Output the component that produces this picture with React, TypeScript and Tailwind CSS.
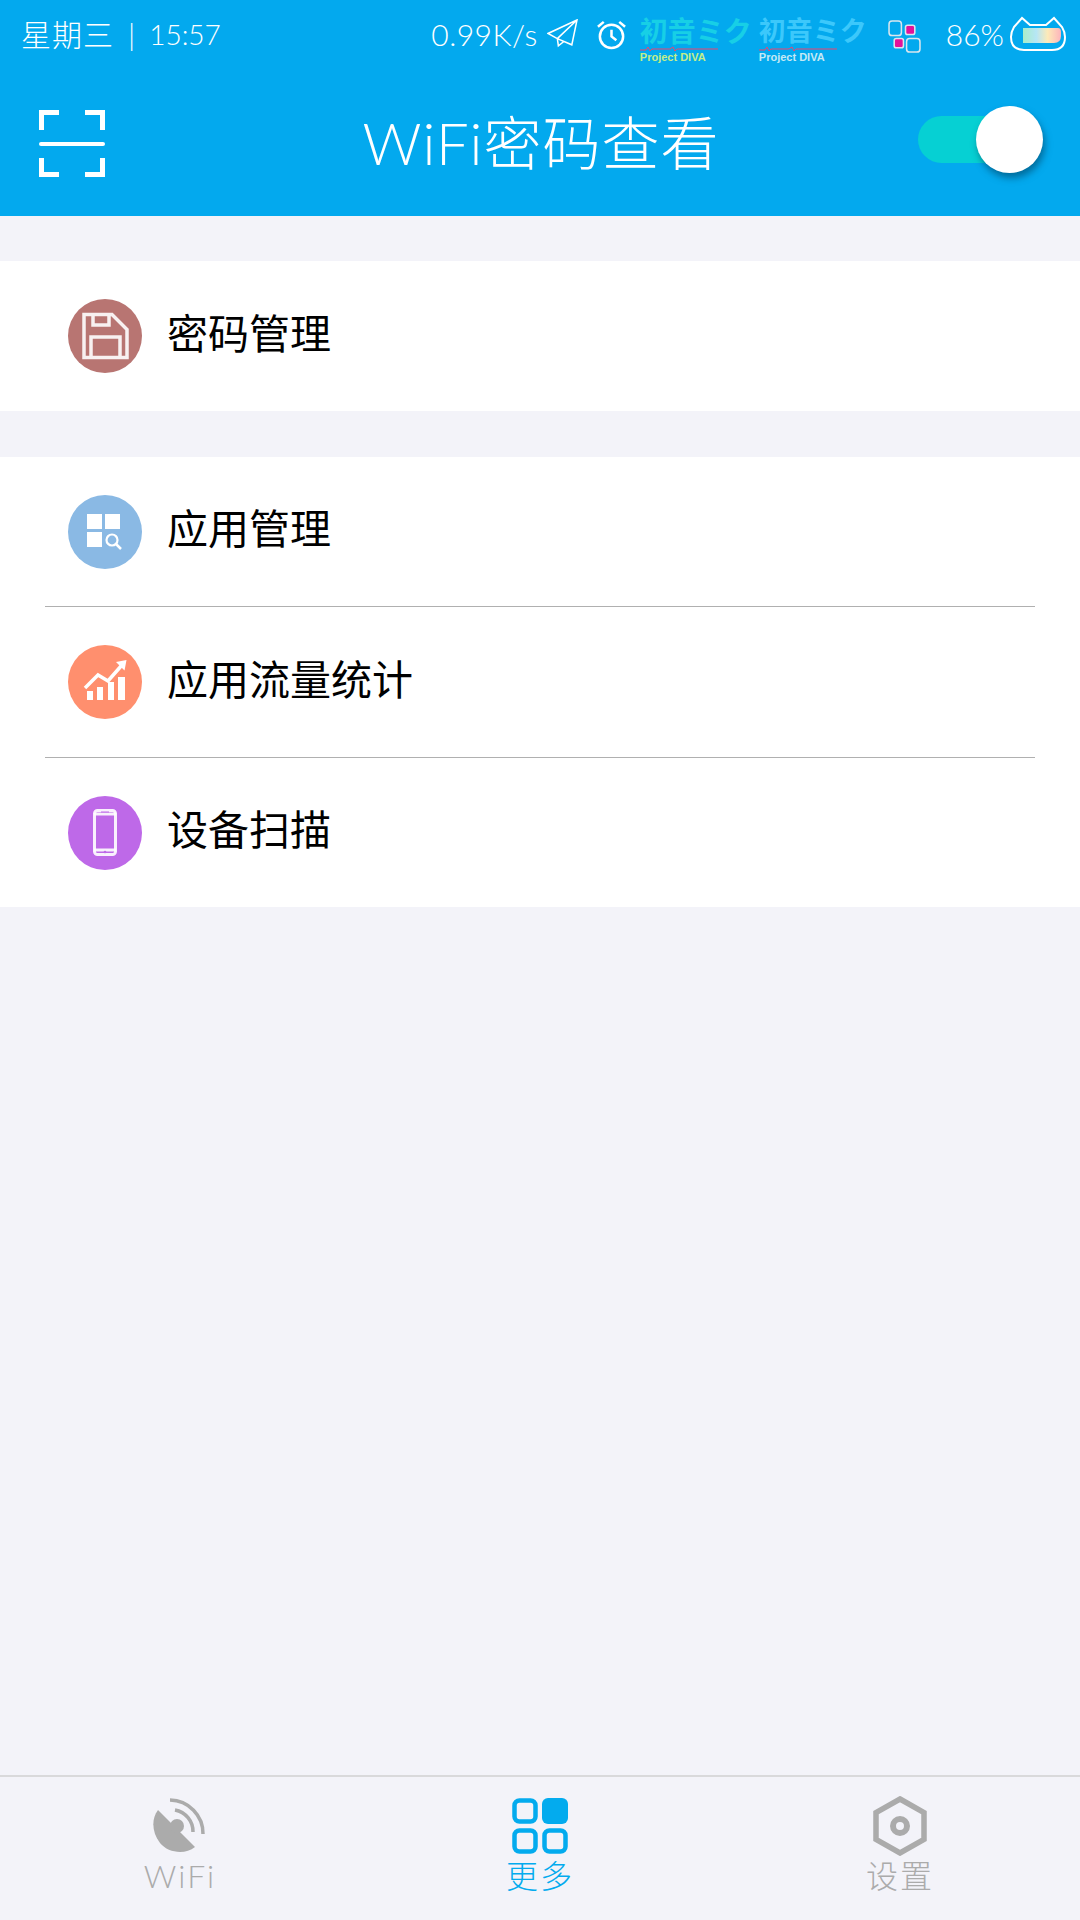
import React from 'react';

const cjk = "font-['Lato','Noto_Sans_CJK_SC',sans-serif]";

const MikuLogo: React.FC<{ mono?: boolean }> = ({ mono }) => (
  <div className={`relative mt-[12px] flex h-[48px] flex-col ${mono ? 'w-[108px]' : 'w-[113px]'}`}>
    <span className={`whitespace-nowrap leading-[30px] font-bold ${cjk} ${mono ? 'text-[27px] text-[#3cc8fb]' : 'text-[28px] text-[#17cfe6]'}`}>初音ミク</span>
    <svg width="78" height="6" viewBox="0 0 78 6">
      <path d="M0 4h6l2-3 2 4 2-2h18l3-2 2 4 2-2h41" fill="none" stroke="#f0436e" strokeWidth="1" />
    </svg>
    <span className={`text-[11px] leading-[11px] font-bold whitespace-nowrap font-['Liberation_Sans',sans-serif] ${mono ? 'text-[#c4e9f5]' : 'text-[#c2ee8a]'}`}>Project DIVA</span>
  </div>
);

const StatusBar = () => (
  <div className={`flex h-[68px] items-center pl-[21px] pr-[13px] text-[30px] font-light text-white ${cjk}`}>
    <div className="flex items-center gap-[14px] whitespace-nowrap">
      <span className="tracking-[1px]">星期三</span>
      <span>|</span>
      <span className="text-[28px]">15:57</span>
    </div>
    <div className="ml-auto flex items-center">
      <span className="whitespace-nowrap tracking-[0.5px]">0.99K/s</span>
      <svg width="31" height="31" viewBox="0 0 30 30" className="ml-[9px]" fill="none" stroke="white" strokeWidth="1.500">
        <path d="M29 1 1 14l9 5 14 6L29 1ZM29 1 10 19l1 7 5-4" />
      </svg>
      <svg width="31" height="31" viewBox="0 0 32 32" className="ml-[18px]" fill="none" stroke="white" strokeWidth="2.600">
        <circle cx="16" cy="18" r="12" />
        <path d="M16 11v7l5 4M2 8l6-5M30 8l-6-5" />
      </svg>
      <div className="ml-[13px] flex gap-[6px]">
        <MikuLogo />
        <MikuLogo mono />
      </div>
      <svg width="33" height="33" viewBox="0 0 32 32" className="ml-[21px] mt-[4px]" fill="none" stroke="#d9e6ee" strokeWidth="1.500">
        <rect x="1" y="1" width="12" height="14" rx="3" />
        <rect x="18" y="18" width="13" height="13" rx="3" />
        <rect x="17" y="5" width="9" height="9" rx="2" fill="#e2129a" />
        <rect x="6" y="18" width="9" height="9" rx="2" fill="#e2129a" />
      </svg>
      <span className="ml-[25px] whitespace-nowrap">86%</span>
      <svg width="58" height="36" viewBox="0 0 56 36" className="ml-[5px]">
        <defs>
          <linearGradient id="batt" x1="0" x2="1">
            <stop offset="0" stopColor="#a8edc8" />
            <stop offset="0.35" stopColor="#b6e6f5" />
            <stop offset="0.65" stopColor="#fdeab8" />
            <stop offset="1" stopColor="#fdb4bc" />
          </linearGradient>
        </defs>
        <path d="M4 11 12 2l8 7h16l8-7 8 9q3 5 3 10 0 13-13 13H14Q1 34 1 21q0-5 3-10Z" fill="none" stroke="white" strokeWidth="2" />
        <path d="M13 12h35q3 0 3 4v4q0 7-7 7H13Z" fill="url(#batt)" />
      </svg>
    </div>
  </div>
);

const ScanIcon = () => (
  <svg width="66" height="67" viewBox="0 0 66 67" fill="none" stroke="white" strokeWidth="5">
    <path d="M20 2.500H2.500V20M46 2.500h17.500V20M20 64.500H2.500V48M46 64.500h17.500V48" />
    <path d="M2 34h62" strokeLinecap="round" strokeWidth="4" />
  </svg>
);

const Header = () => (
  <div className="grid h-[148px] grid-cols-[1fr_auto_1fr] items-center pl-[39px] pr-[37px] pt-[2px]">
    <ScanIcon />
    <h1 className={`whitespace-nowrap text-[58px] leading-none font-light tracking-[1px] text-white ${cjk}`}>WiFi密码查看</h1>
    <div className="relative ml-auto -mt-[7px] h-[47px] w-[125px]">
      <div className="h-[47px] w-[90px] rounded-full bg-[#06d0d3]" />
      <div className="absolute right-0 top-[-10px] h-[67px] w-[67px] rounded-full bg-white shadow-[2px_5px_7px_rgba(0,60,90,0.55)]" />
    </div>
  </div>
);

const IconCircle: React.FC<{ color: string; children: React.ReactNode }> = ({ color, children }) => (
  <div className={`flex h-[74px] w-[74px] items-center justify-center rounded-full ${color}`}>
    <svg width="74" height="74" viewBox="0 0 74 74">{children}</svg>
  </div>
);

const Row: React.FC<{ label: string; icon: React.ReactNode; height?: string }> = ({ label, icon, height = 'h-[150px]' }) => (
  <div className={`flex items-center pl-[68px] ${height}`}>
    {icon}
    <span className={`ml-[25px] pb-[6px] text-[41px] leading-none font-normal text-black ${cjk}`}>{label}</span>
  </div>
);

const FloppyIcon = () => (
  <IconCircle color="bg-[#b87572]">
    <g fill="none" stroke="white" strokeWidth="3.500" opacity="0.9">
      <path d="M16 15.500h28l15 15v28H16Z" />
      <path d="M23 58V38h29v20M25 16v10h16V16" />
    </g>
  </IconCircle>
);

const AppsIcon = () => (
  <IconCircle color="bg-[#8ab9e4]">
    <g fill="white">
      <rect x="19" y="19" width="15" height="15" />
      <rect x="37" y="19" width="15" height="15" />
      <rect x="19" y="37" width="15" height="15" />
    </g>
    <circle cx="44" cy="45" r="5.500" fill="none" stroke="white" strokeWidth="2.200" />
    <path d="m48 49 5 5" stroke="white" strokeWidth="2.500" />
  </IconCircle>
);

const ChartIcon = () => (
  <IconCircle color="bg-[#ff8f6e]">
    <g fill="white">
      <rect x="19" y="46" width="6" height="9" />
      <rect x="29" y="42" width="6" height="13" />
      <rect x="40" y="37" width="6" height="18" />
      <rect x="50" y="32" width="7" height="23" />
    </g>
    <path d="m17 43 13-13 10 6 14-16" fill="none" stroke="white" strokeWidth="3.500" />
    <path d="m48 17 10.500-2-2 10.500Z" fill="white" />
  </IconCircle>
);

const PhoneIcon = () => (
  <IconCircle color="bg-[#be69e8]">
    <rect x="26.500" y="14.500" width="21" height="44" rx="3" fill="none" stroke="white" strokeWidth="3" opacity="0.9" />
    <path d="M26 18h22M26 54h22" stroke="white" strokeWidth="3" opacity="0.9" />
    <path d="M33 16h8" stroke="#be69e8" strokeWidth="1" />
    <circle cx="37" cy="56" r="1.300" fill="#be69e8" />
  </IconCircle>
);

const Divider = () => <div className="mx-[45px] h-px bg-[#b0b0b0]" />;

const NavItem: React.FC<{ label: string; active?: boolean; children: React.ReactNode }> = ({ label, active, children }) => (
  <div className="flex flex-col items-center">
    {children}
    <span className={`mt-[5px] whitespace-nowrap text-[32px] leading-[34px] font-light tracking-[2px] ${cjk} ${active ? 'text-[#03abee]' : 'text-[#ababab]'}`}>{label}</span>
  </div>
);

const BottomNav = () => (
  <div className="grid h-[145px] grid-cols-3 items-start border-t-2 border-[#d9d9db] pt-[21px]">
    <NavItem label="WiFi">
      <svg width="56" height="56" viewBox="0 0 56 56">
        <path d="M6 12 43 49C33 57 16 55 8 45 0 35-1 21 6 12Z" fill="#ababab" />
        <circle cx="25" cy="28" r="7" fill="#ababab" />
        <path d="M23 12a22 22 0 0 1 18 22" fill="none" stroke="#ababab" strokeWidth="3.500" />
        <path d="M18 2a33.500 33.500 0 0 1 33 34" fill="none" stroke="#ababab" strokeWidth="3.500" />
      </svg>
    </NavItem>
    <NavItem label="更多" active>
      <svg width="56" height="56" viewBox="0 0 56 56">
        <g fill="none" stroke="#03abee" strokeWidth="4.500">
          <rect x="2.500" y="2.500" width="21" height="21" rx="5" />
          <rect x="2.500" y="32.500" width="21" height="21" rx="5" />
          <rect x="32.500" y="32.500" width="21" height="21" rx="5" />
        </g>
        <rect x="30" y="0" width="26" height="26" rx="6" fill="#03abee" />
      </svg>
    </NavItem>
    <NavItem label="设置">
      <svg width="54" height="60" viewBox="0 0 54 60" className="-mt-[2px] -mb-[2px]">
        <path d="M27 3 51 16.500v27L27 57 3 43.500v-27Z" fill="none" stroke="#ababab" strokeWidth="5.500" />
        <circle cx="27" cy="30" r="7" fill="none" stroke="#ababab" strokeWidth="6" />
      </svg>
    </NavItem>
  </div>
);

export default function App() {
  return (
    <div className="flex h-[1920px] w-[1080px] flex-col overflow-hidden bg-[#f3f3f9]">
      <div className="bg-[#03a9ee]">
        <StatusBar />
        <Header />
      </div>
      <div className="mt-[45px] bg-white">
        <Row label="密码管理" icon={<FloppyIcon />} />
      </div>
      <div className="mt-[46px] bg-white">
        <Row label="应用管理" icon={<AppsIcon />} height="h-[149px]" />
        <Divider />
        <Row label="应用流量统计" icon={<ChartIcon />} />
        <Divider />
        <Row label="设备扫描" icon={<PhoneIcon />} height="h-[149px]" />
      </div>
      <div className="flex-1" />
      <BottomNav />
    </div>
  );
}
